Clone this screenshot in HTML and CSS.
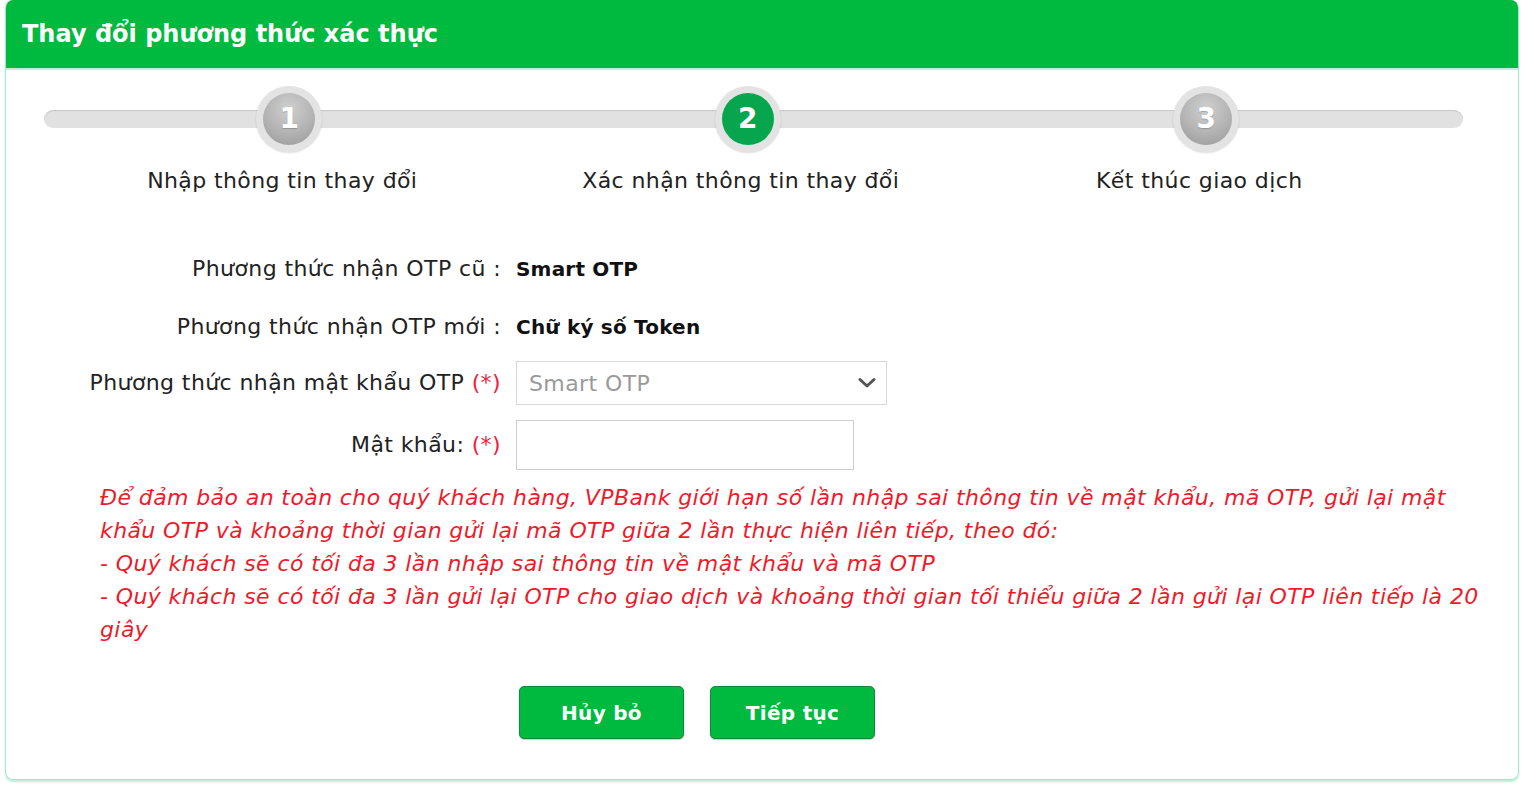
FILE: index.html
```html
<!DOCTYPE html>
<html lang="vi">
<head>
<meta charset="utf-8">
<title>Thay đổi phương thức xác thực</title>
<link rel="stylesheet" href="styles.css">
</head>
<body>
<div class="panel">
  <div class="panel-header">Thay đổi phương thức xác thực</div>
  <div class="steps">
    <div class="step">
      <div class="circle"><span class="num">1</span></div>
      <div class="step-label">Nhập thông tin thay đổi</div>
    </div>
    <div class="step active">
      <div class="circle"><span class="num">2</span></div>
      <div class="step-label">Xác nhận thông tin thay đổi</div>
    </div>
    <div class="step">
      <div class="circle"><span class="num">3</span></div>
      <div class="step-label">Kết thúc giao dịch</div>
    </div>
  </div>
  <div class="form">
    <div class="row r1">
      <div class="label">Phương thức nhận OTP cũ :</div>
      <div class="value">Smart OTP</div>
    </div>
    <div class="row r2">
      <div class="label">Phương thức nhận OTP mới :</div>
      <div class="value">Chữ ký số Token</div>
    </div>
    <div class="row r3">
      <div class="label">Phương thức nhận mật khẩu OTP <span class="req">(*)</span></div>
      <div class="field">
        <div class="select"><span>Smart OTP</span>
          <svg class="chev" width="18" height="12" viewBox="0 0 18 12"><path d="M2 2.5 L9 9 L16 2.5" fill="none" stroke="#555" stroke-width="3" stroke-linecap="round" stroke-linejoin="round"/></svg>
        </div>
      </div>
    </div>
    <div class="row r4">
      <div class="label">Mật khẩu: <span class="req">(*)</span></div>
      <div class="field"><div class="input"></div></div>
    </div>
    <div class="note">
      <p>Để đảm bảo an toàn cho quý khách hàng, VPBank giới hạn số lần nhập sai thông tin về mật khẩu, mã OTP, gửi lại mật khẩu OTP và khoảng thời gian gửi lại mã OTP giữa 2 lần thực hiện liên tiếp, theo đó:</p>
      <p>- Quý khách sẽ có tối đa 3 lần nhập sai thông tin về mật khẩu và mã OTP</p>
      <p>- Quý khách sẽ có tối đa 3 lần gửi lại OTP cho giao dịch và khoảng thời gian tối thiểu giữa 2 lần gửi lại OTP liên tiếp là 20 giây</p>
    </div>
    <div class="actions">
      <button class="btn">Hủy bỏ</button>
      <button class="btn">Tiếp tục</button>
    </div>
  </div>
</div>
</body>
</html>
```
FILE: styles.css
```css
* { box-sizing: border-box; }
html, body { margin: 0; padding: 0; background: #fff; }
body {
  font-family: "DejaVu Sans", "Open Sans", sans-serif;
  color: #1f1f1f;
  width: 1540px;
  height: 792px;
  overflow: hidden;
}
.panel {
  margin: 0 21px 0 5px;
  height: 780px;
  border: 1px solid #a9e6c9;
  border-top: none;
  border-radius: 8px;
  box-shadow: 0 2px 2px rgba(70, 200, 140, 0.35);
  overflow: hidden;
}
.panel-header {
  height: 70px;
  background: #00ba3f;
  border-bottom: 2px solid #c5eed9;
  color: #fff;
  font-weight: 700;
  font-size: 24px;
  line-height: 68px;
  padding-left: 16px;
}
.steps {
  position: relative;
  display: grid;
  grid-template-columns: repeat(3, 458.5px);
  padding: 16px 0 0 47px;
}
.steps::before {
  content: "";
  position: absolute;
  left: 38px;
  top: 40px;
  width: 1419px;
  height: 18px;
  border-radius: 9px;
  background: #e1e1e1;
  box-shadow: inset 0 1px 1px rgba(0,0,0,0.12);
}
.step {
  position: relative;
  display: flex;
  flex-direction: column;
  align-items: center;
}
.circle {
  width: 66px;
  height: 66px;
  border-radius: 50%;
  background: #e3e3e3;
  margin-left: 14px;
  display: flex;
  align-items: center;
  justify-content: center;
  box-shadow: 0 1px 2px rgba(0,0,0,0.15);
}
.num {
  width: 52px;
  height: 52px;
  border-radius: 50%;
  background: radial-gradient(circle at 50% 30%, #cfcfcf 0%, #b3b3b3 55%, #979797 100%);
  color: #fff;
  font-weight: 700;
  font-size: 28px;
  line-height: 52px;
  text-align: center;
  text-shadow: 0 1px 1px rgba(0,0,0,0.2);
}
.step.active .num {
  background: #07a64e;
  text-shadow: none;
}
.step-label {
  margin-top: 14px;
  font-size: 22px;
  letter-spacing: 0.4px;
  line-height: 30px;
  color: #222;
}
.form {
  padding-top: 58px;
}
.row {
  display: grid;
  grid-template-columns: 495px 1fr;
  column-gap: 15px;
  align-items: center;
}
.label {
  text-align: right;
  font-size: 22px;
  letter-spacing: 0.4px;
  line-height: 30px;
  color: #222;
  white-space: nowrap;
}
.value {
  font-weight: 700;
  font-size: 20px;
  letter-spacing: 0.2px;
  line-height: 30px;
  color: #111;
}
.r1 { height: 30px; }
.r2 { height: 30px; margin-top: 28px; }
.r3 { height: 44px; margin-top: 19px; }
.r4 { height: 50px; margin-top: 15px; }
.req { color: #f0203c; }
.select {
  width: 371px;
  height: 44px;
  border: 1px solid #d8d8d8;
  display: flex;
  align-items: center;
  justify-content: space-between;
  padding: 0 10px 0 12px;
  font-size: 22px;
  letter-spacing: 0.4px;
  color: #9a9a9a;
}
.input {
  width: 338px;
  height: 50px;
  border: 1px solid #cdcdcd;
}
.note {
  margin: 11px 32px 0 94px;
  color: #ee1a2a;
  font-style: italic;
  font-size: 22px;
  letter-spacing: 0.4px;
  line-height: 33px;
}
.note p { margin: 0; }
.actions {
  display: flex;
  gap: 26px;
  padding-left: 513px;
  margin-top: 40px;
}
.btn {
  width: 165px;
  height: 53px;
  border: 1px solid #0b8a3a;
  border-radius: 5px;
  background: #00ba3f;
  color: #fff;
  font-family: "DejaVu Sans", "Open Sans", sans-serif;
  font-weight: 700;
  font-size: 20px;
  letter-spacing: 0.3px;
  box-shadow: 0 1px 1px rgba(0,0,0,0.2);
}
```
